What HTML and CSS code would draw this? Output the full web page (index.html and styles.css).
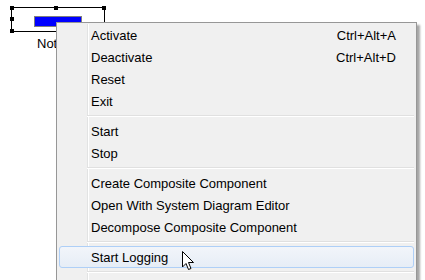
FILE: index.html
```html
<!DOCTYPE html>
<html lang="en">
<head>
    <meta charset="UTF-8">
    <title>Component Context Menu</title>
    <link rel="stylesheet" href="styles.css">
</head>
<body>
    <div class="canvas">
        <div class="component">
            <svg class="selection" width="100" height="30" viewBox="0 0 100 30">
                <rect x="1.5" y="1.5" width="93" height="24" fill="none" stroke="#000" stroke-width="1"/>
                <rect x="0" y="0" width="4" height="4" fill="#000"/>
                <rect x="44" y="0" width="4" height="4" fill="#000"/>
                <rect x="92" y="0" width="4" height="4" fill="#000"/>
                <rect x="0" y="11" width="4" height="4" fill="#000"/>
                <rect x="0" y="23" width="4" height="4" fill="#000"/>
            </svg>
            <div class="block"></div>
            <div class="name">Not</div>
        </div>

        <div class="menu">
            <ul class="menu-list">
                <li class="item"><span>Activate</span><span class="key">Ctrl+Alt+A</span></li>
                <li class="item"><span>Deactivate</span><span class="key">Ctrl+Alt+D</span></li>
                <li class="item"><span>Reset</span></li>
                <li class="item"><span>Exit</span></li>
                <li class="sep"></li>
                <li class="item"><span>Start</span></li>
                <li class="item"><span>Stop</span></li>
                <li class="sep"></li>
                <li class="item"><span>Create Composite Component</span></li>
                <li class="item"><span>Open With System Diagram Editor</span></li>
                <li class="item"><span>Decompose Composite Component</span></li>
                <li class="sep"></li>
                <li class="item hover"><span>Start Logging</span></li>
                <li class="sep"></li>
            </ul>
        </div>

        <svg class="cursor" width="13" height="20" viewBox="0 0 13 20">
            <path d="M0.5 0.5 L0.5 16 L4 12.5 L6.5 18.5 L9 17.5 L6.5 11.5 L11.5 11.5 Z" fill="#fff" stroke="#000" stroke-width="1" stroke-linejoin="miter"/>
        </svg>
    </div>
</body>
</html>
```

FILE: styles.css
```css
* {
    margin: 0;
    padding: 0;
    box-sizing: border-box;
}

body {
    background: #fff;
    font-family: "Liberation Sans", Arial, sans-serif;
    font-size: 13px;
    color: #000;
    overflow: hidden;
}

.canvas {
    position: relative;
    width: 425px;
    height: 280px;
    overflow: hidden;
}

.component {
    position: absolute;
    left: 10px;
    top: 6px;
    width: 100px;
    height: 45px;
}

.selection {
    position: absolute;
    left: 0;
    top: 0;
}

.block {
    position: absolute;
    left: 24px;
    top: 10px;
    width: 48px;
    height: 11px;
    background: #0000ff;
    border: 1px solid #7f7f7f;
}

.name {
    position: absolute;
    left: 27px;
    top: 30px;
    font-size: 13px;
}

.menu {
    position: absolute;
    left: 56px;
    top: 22px;
    width: 361px;
    height: 258px;
    background: #f0f0f0;
    border: 1px solid #979797;
    border-bottom: none;
    box-shadow: 3px 3px 2px rgba(0, 0, 0, 0.35);
    padding: 1px 2px 0;
}

.menu-list {
    list-style: none;
    height: 100%;
    background: linear-gradient(to right, transparent 28px, #e2e3e3 28px, #e2e3e3 29px, #fff 29px, #fff 30px, transparent 30px);
}

.item {
    display: flex;
    justify-content: space-between;
    align-items: center;
    height: 22px;
    padding: 0 17px 0 31px;
    border: 1px solid transparent;
    border-radius: 3px;
}

.item.hover {
    background: linear-gradient(to bottom, #f2f5fa, #e6edf6);
    border-color: #aecff7;
}

.sep {
    height: 8px;
    margin-left: 28px;
    background: linear-gradient(to bottom, transparent 3px, #e0e0e0 3px, #e0e0e0 4px, #fff 4px, #fff 5px, transparent 5px);
}

.key {
    text-align: right;
}

.cursor {
    position: absolute;
    left: 182px;
    top: 251px;
}
```
